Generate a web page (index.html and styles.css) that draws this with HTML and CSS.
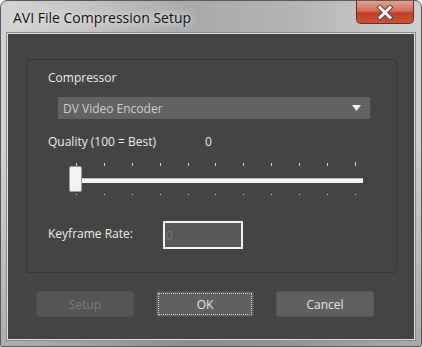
FILE: index.html
```html
<html lang="en">

<head>
    <meta charset="UTF-8">
    <title>AVI File Compression Setup</title>
    <link rel="stylesheet" href="styles.css">
</head>

<body>
    <div class="window">
        <div class="titlebar">
            <span class="title">AVI File Compression Setup</span>
            <div class="close">
                <svg width="20" height="15" viewBox="0 0 20 15">
                    <path d="M5 2.5 L15 12.5 M15 2.5 L5 12.5" stroke="#5a4440" stroke-width="5" stroke-linecap="square" fill="none"/>
                    <path d="M5 2.5 L15 12.5 M15 2.5 L5 12.5" stroke="#ffffff" stroke-width="3" stroke-linecap="square" fill="none"/>
                </svg>
            </div>
        </div>
        <div class="client">
            <div class="group">
                <div class="label">Compressor</div>
                <div class="select">
                    <span>DV Video Encoder</span>
                    <svg width="9" height="6" viewBox="0 0 9 6"><path d="M0 0 H9 L4.5 6 Z" fill="#f0f0f0"/></svg>
                </div>
                <div class="quality-row">
                    <span class="quality-label">Quality (100 = Best)</span>
                    <span class="value">0</span>
                </div>
                <div class="slider">
                    <div class="ticks">
                        <i></i><i></i><i></i><i></i><i></i><i></i><i></i><i></i><i></i><i></i><i class="long"></i>
                    </div>
                    <div class="track-area">
                        <div class="track"></div>
                        <div class="thumb"></div>
                    </div>
                    <div class="ticks dots">
                        <i></i><i></i><i></i><i></i><i></i><i></i><i></i><i></i><i></i><i></i><i></i>
                    </div>
                </div>
                <div class="keyframe-row">
                    <span>Keyframe Rate:</span>
                    <input type="text" value="0" disabled>
                </div>
            </div>
            <div class="buttons">
                <button class="disabled">Setup</button>
                <button class="focused">OK</button>
                <button>Cancel</button>
            </div>
        </div>
    </div>
</body>

</html>
```

FILE: styles.css
```css
body {
    margin: 0;
    background-color: #ffffff;
    font-family: "Open Sans", "Noto Sans", sans-serif;
}

.window {
    width: 422px;
    height: 347px;
    box-sizing: border-box;
    border: 1px solid #5a5a5a;
    border-radius: 7px 7px 2px 2px;
    background:
        linear-gradient(180deg, rgba(255, 255, 255, 0) 40%, rgba(60, 60, 60, 0.25) 100%),
        linear-gradient(90deg, #d4d4d4 0%, #c4c4c4 20%, #a9a9a9 45%, #b4b4b4 70%, #cfcfcf 100%);
    padding: 0 6px 6px 6px;
    display: flex;
    flex-direction: column;
}

.titlebar {
    height: 32px;
    display: flex;
    justify-content: space-between;
    align-items: flex-start;
}

.title {
    margin: 7px 0 0 6px;
    font-size: 14px;
    color: #111;
    text-shadow: 0 0 8px #e8e8e8, 0 0 6px #e8e8e8;
}

.close {
    width: 58px;
    height: 23px;
    margin-right: 1px;
    box-sizing: border-box;
    border: 1px solid #6b2a22;
    border-top: none;
    border-radius: 0 0 5px 5px;
    background: linear-gradient(180deg, #e4a08f 0%, #d0705c 45%, #c03f22 55%, #c8553b 100%);
    display: flex;
    justify-content: center;
    align-items: center;
}

.client {
    flex: 1;
    background-color: #444444;
    border: 1px solid #e0e0e0;
    box-shadow: 0 0 0 1px #8a8a8a;
    display: flex;
    flex-direction: column;
    color: #ececec;
    font-size: 12px;
}

.group {
    margin: 25px 0 0 18px;
    width: 371px;
    height: 214px;
    box-sizing: border-box;
    border: 1px solid #363636;
    border-radius: 3px;
    padding: 10px 0 0 21px;
}

.label {
    line-height: 16px;
}

.select {
    margin: 11px 0 0 10px;
    width: 312px;
    height: 22px;
    box-sizing: border-box;
    background-color: #636363;
    color: #cfcfcf;
    padding: 0 9px 0 5px;
    display: flex;
    justify-content: space-between;
    align-items: center;
}

.quality-row {
    margin-top: 15px;
    line-height: 16px;
    display: flex;
}

.quality-label {
    width: 157px;
}

.slider {
    margin: 12px 0 0 21px;
    width: 294px;
    display: flex;
    flex-direction: column;
}

.ticks {
    height: 4px;
    padding: 0 7px 0 7px;
    display: flex;
    justify-content: space-between;
}

.ticks i {
    width: 1px;
    height: 3px;
    margin-top: 1px;
    background-color: #d8d8d8;
}

.ticks i.long {
    height: 4px;
    margin-top: 0;
}

.ticks.dots {
    margin-top: 2px;
    height: 2px;
}

.ticks.dots i {
    height: 1px;
    margin-top: 0;
}

.track-area {
    position: relative;
    height: 26px;
    display: flex;
    align-items: center;
}

.track {
    width: 100%;
    height: 5px;
    margin-top: 2px;
    background-color: #f4f4f4;
    border-top: 1px solid #bdbdbd;
    box-sizing: border-box;
}

.thumb {
    position: absolute;
    left: 0;
    top: 0;
    width: 13px;
    height: 26px;
    box-sizing: border-box;
    background-color: #f2f2f2;
    border: 1px solid #9a9a9a;
    border-radius: 2px;
}

.keyframe-row {
    margin-top: 25px;
    display: flex;
    align-items: center;
}

.keyframe-row span {
    margin-top: -3px;
}

.keyframe-row input {
    margin-left: 30px;
    width: 80px;
    height: 28px;
    box-sizing: border-box;
    border: 2px solid #f2f2f2;
    background-color: #585858;
    color: #7a7a7a;
    font-family: "Open Sans", "Noto Sans", sans-serif;
    font-size: 12px;
    padding: 0 1px;
}

.buttons {
    margin: 18px 0 0 28px;
    display: flex;
    gap: 22px;
}

.buttons button {
    width: 98px;
    height: 26px;
    border: 1px solid #565656;
    border-radius: 3px;
    background-color: #606060;
    color: #e4e4e4;
    font-family: "Open Sans", "Noto Sans", sans-serif;
    font-size: 12px;
    padding: 0;
}

.buttons button.disabled {
    background-color: #555555;
    color: #7c7c7c;
    border-color: #505050;
}

.buttons button.focused {
    outline: 1px dotted #d0d0d0;
    outline-offset: -3px;
}
```
